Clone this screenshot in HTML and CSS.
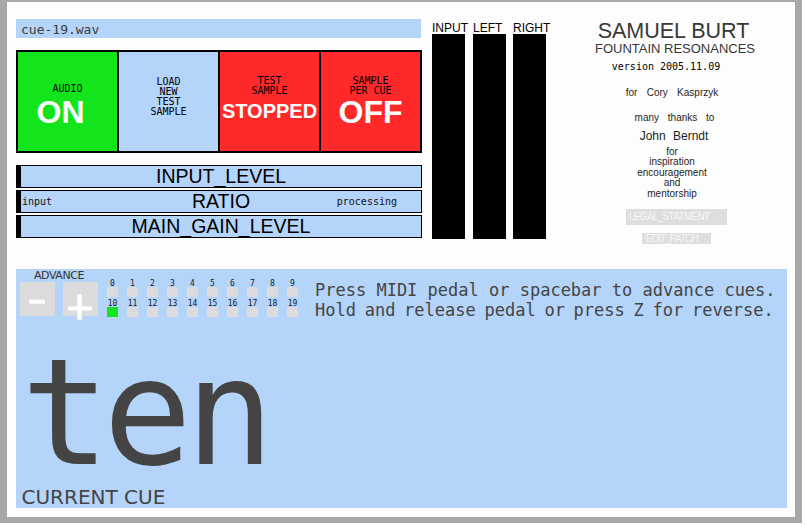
FILE: index.html
```html
<!DOCTYPE html>
<html>
<head>
<meta charset="utf-8">
<title>Fountain Resonances</title>
<link rel="stylesheet" href="styles.css">
</head>
<body>
<div class="frame">
  <div class="top">
    <div class="left">
      <div class="filename">cue-19.wav</div>
      <div class="buttons">
        <div class="btn green pad-audio"><div class="small">AUDIO</div><div class="big on">ON</div></div>
        <div class="btn blue pad-load"><div class="small">LOAD<br>NEW<br>TEST<br>SAMPLE</div></div>
        <div class="btn red pad-test"><div class="small">TEST<br>SAMPLE</div><div class="mid">STOPPED</div></div>
        <div class="btn red pad-test"><div class="small">SAMPLE<br>PER CUE</div><div class="big">OFF</div></div>
      </div>
      <div class="sliders">
        <div class="slider"><span></span><span class="slabel">INPUT_LEVEL</span><span></span></div>
        <div class="slider"><span class="side">input</span><span class="slabel">RATIO</span><span class="side right">processing</span></div>
        <div class="slider"><span></span><span class="slabel">MAIN_GAIN_LEVEL</span><span></span></div>
      </div>
    </div>
    <div class="meters">
      <div class="meter"><div class="mlabel">INPUT</div><div class="bar"></div></div>
      <div class="meter m2"><div class="mlabel">LEFT</div><div class="bar"></div></div>
      <div class="meter m3"><div class="mlabel">RIGHT</div><div class="bar"></div></div>
    </div>
    <div class="credits">
      <div class="title">SAMUEL BURT</div>
      <div class="subtitle">FOUNTAIN RESONANCES</div>
      <div class="version">version 2005.11.09</div>
      <div class="line for-cory">for Cory Kasprzyk</div>
      <div class="line thanks">many thanks to</div>
      <div class="john">John Berndt</div>
      <div class="block">for<br>inspiration<br>encouragement<br>and<br>mentorship</div>
      <div class="gbtn legal">LEGAL_STATMENT</div>
      <div class="gbtn edit">EDIT_PATCH</div>
    </div>
  </div>
  <div class="panel">
    <div class="ptop">
      <div class="advance">
        <div class="adv-label">ADVANCE</div>
        <div class="adv-btns">
          <div class="adv-btn"><svg width="35" height="34" viewBox="0 0 35 34"><rect x="9.3" y="17.7" width="15.7" height="4" fill="#fff"/></svg></div>
          <div class="adv-btn"><svg class="plus" width="35" height="34" viewBox="0 0 35 34"><rect x="5" y="24.4" width="24" height="4" fill="#fff"/><rect x="14.4" y="12" width="4.4" height="25.7" fill="#fff"/></svg></div>
        </div>
      </div>
      <div class="cues">
        <div class="cue"><div class="num">0</div><div class="box"></div></div>
        <div class="cue"><div class="num">1</div><div class="box"></div></div>
        <div class="cue"><div class="num">2</div><div class="box"></div></div>
        <div class="cue"><div class="num">3</div><div class="box"></div></div>
        <div class="cue"><div class="num">4</div><div class="box"></div></div>
        <div class="cue"><div class="num">5</div><div class="box"></div></div>
        <div class="cue"><div class="num">6</div><div class="box"></div></div>
        <div class="cue"><div class="num">7</div><div class="box"></div></div>
        <div class="cue"><div class="num">8</div><div class="box"></div></div>
        <div class="cue"><div class="num">9</div><div class="box"></div></div>
        <div class="cue"><div class="num">10</div><div class="box active"></div></div>
        <div class="cue"><div class="num">11</div><div class="box"></div></div>
        <div class="cue"><div class="num">12</div><div class="box"></div></div>
        <div class="cue"><div class="num">13</div><div class="box"></div></div>
        <div class="cue"><div class="num">14</div><div class="box"></div></div>
        <div class="cue"><div class="num">15</div><div class="box"></div></div>
        <div class="cue"><div class="num">16</div><div class="box"></div></div>
        <div class="cue"><div class="num">17</div><div class="box"></div></div>
        <div class="cue"><div class="num">18</div><div class="box"></div></div>
        <div class="cue"><div class="num">19</div><div class="box"></div></div>
      </div>
      <div class="instructions"><div>Press MIDI pedal or spacebar to advance cues.</div><div class="l2">Hold and release pedal or press Z for reverse.</div></div>
    </div>
    <div class="current">ten</div>
    <div class="cue-label">CURRENT CUE</div>
  </div>
</div>
</body>
</html>
```
FILE: styles.css
```css
* { box-sizing: border-box; }
html, body { margin: 0; padding: 0; background: #ffffff; }
body { font-family: "Liberation Sans", Arial, sans-serif; }

.frame {
  width: 802px;
  height: 523px;
  border-style: solid;
  border-color: #a8a8a8;
  border-width: 2px 7px 6px 7px;
  background: #fdfdfd;
}

.top {
  display: flex;
  align-items: flex-start;
  height: 267px;
  padding: 17px 0 0 9px;
}

.left { width: 406px; flex: none; }

.filename {
  width: 405px;
  height: 19px;
  background: #b4d4fa;
  font: 13px/21px "DejaVu Sans Mono", monospace;
  color: #3c3c3c;
  padding-left: 5px;
  overflow: hidden;
}

.buttons {
  display: flex;
  gap: 2px;
  margin-top: 12px;
  height: 103px;
  border: 2px solid #000;
  background: #000;
}
.btn {
  flex: 1;
  display: flex;
  flex-direction: column;
  align-items: center;
}
.green { background: #13e41b; }
.blue { background: #b4d4fa; }
.red { background: #ff2929; }
.pad-audio { padding-top: 32px; }
.pad-load { padding-top: 25px; }
.pad-test { padding-top: 24px; }

.small {
  font: 10px/10px "DejaVu Sans Mono", monospace;
  color: #000;
  text-align: center;
}
.big {
  font: bold 32px/32px "Liberation Sans", Arial, sans-serif;
  color: #fff;
}
.on { margin-top: 2px; margin-right: 14px; }
.mid {
  font: bold 20px/21px "Liberation Sans", Arial, sans-serif;
  color: #fff;
  margin-top: 5px;
}

.sliders { margin-top: 12px; }
.slider {
  height: 23px;
  margin-bottom: 2px;
  border: 1px solid #000;
  border-left: 5px solid #000;
  background: #b4d4fa;
  display: grid;
  grid-template-columns: 1fr auto 1fr;
  align-items: center;
}
.slabel {
  font: 19.5px/21px "Liberation Sans", Arial, sans-serif;
  color: #000;
  white-space: nowrap;
}
.side {
  font: 10px/10px "DejaVu Sans Mono", monospace;
  color: #111;
  padding-left: 1px;
}
.side.right { justify-self: end; padding-right: 24px; }

.meters {
  display: flex;
  flex: none;
  margin: 3px 0 0 10px;
}
.meter { width: 33px; }
.m2 { margin-left: 8px; }
.m3 { margin-left: 7px; }
.mlabel {
  font: 12px/12px "Liberation Sans", Arial, sans-serif;
  color: #000;
  white-space: nowrap;
}
.bar { height: 205px; background: #000; }

.credits {
  width: 249px;
  flex: none;
  padding-left: 3px;
  margin-top: 2px;
  display: flex;
  flex-direction: column;
  align-items: center;
  color: #1e1e1e;
}
.title {
  font: 21.5px/21px "Liberation Sans", Arial, sans-serif;
  color: #383838;
  margin-left: 3px;
}
.subtitle {
  font: 13px/13px "Liberation Sans", Arial, sans-serif;
  color: #383838;
  margin-left: 6px;
}
.version {
  font: 10px/10px "DejaVu Sans Mono", monospace;
  color: #000;
  margin-top: 7px;
  margin-right: 12px;
}
.line {
  font: 10px/10px "Liberation Sans", Arial, sans-serif;
}
.for-cory { margin-top: 16px; word-spacing: 6.5px; }
.thanks { margin-top: 15px; word-spacing: 6px; margin-left: 5px; }
.john {
  font: 12px/12px "Liberation Sans", Arial, sans-serif;
  word-spacing: 4px;
  margin-top: 7px;
  margin-left: 4px;
}
.block {
  font: 10px/10.4px "Liberation Sans", Arial, sans-serif;
  text-align: center;
  margin-top: 5px;
}
.gbtn {
  background: #dedede;
  color: #f6f6f6;
  font: 10px/16px "Liberation Sans", Arial, sans-serif;
  letter-spacing: -0.7px;
  white-space: nowrap;
  overflow: hidden;
}
.legal {
  width: 101px;
  height: 16px;
  margin-top: 10px;
  margin-left: 9px;
  padding-left: 3px;
}
.edit {
  width: 69px;
  height: 11px;
  line-height: 11px;
  margin-top: 8px;
  margin-left: 9px;
  padding-left: 4px;
  letter-spacing: -0.9px;
}

.panel {
  margin-left: 9px;
  width: 771px;
  height: 239px;
  background: #b4d4fa;
}
.ptop {
  display: flex;
  align-items: flex-start;
  height: 48px;
}
.advance {
  margin-left: 4px;
  width: 78px;
  display: flex;
  flex-direction: column;
  align-items: center;
}
.adv-label {
  font: 11px/11px "DejaVu Sans", sans-serif;
  letter-spacing: -0.4px;
  color: #333;
  margin-top: 1px;
}
.adv-btns {
  display: flex;
  gap: 8px;
  margin-top: 1px;
}
.adv-btn {
  width: 35px;
  height: 34px;
  background: #dcdcdc;
}
.adv-btn svg { display: block; overflow: visible; }

.cues {
  margin-left: 9px;
  margin-top: 11px;
  display: grid;
  grid-template-columns: repeat(10, 11px);
  column-gap: 9px;
  row-gap: 3px;
}
.cue {
  display: flex;
  flex-direction: column;
  align-items: center;
}
.num {
  font: 8px/7px "DejaVu Sans Mono", monospace;
  color: #1a1a1a;
  white-space: nowrap;
}
.box { width: 11px; height: 10px; background: #dcdcdc; }
.box.active { background: #13e41b; }

.instructions {
  margin-left: 17px;
  margin-top: 11px;
  font: 17px/20px "DejaVu Sans Mono", monospace;
  color: #444;
  white-space: pre;
}
.instructions .l2 { word-spacing: -1.5px; }

.current {
  font: 148px/128px "DejaVu Sans Mono", monospace;
  color: #444;
  letter-spacing: -7px;
  margin-top: 32px;
  padding-left: 5px;
  height: 138px;
}
.cue-label {
  font: 20px/20px "DejaVu Sans", sans-serif;
  color: #444;
  padding-left: 5.5px;
}
```
